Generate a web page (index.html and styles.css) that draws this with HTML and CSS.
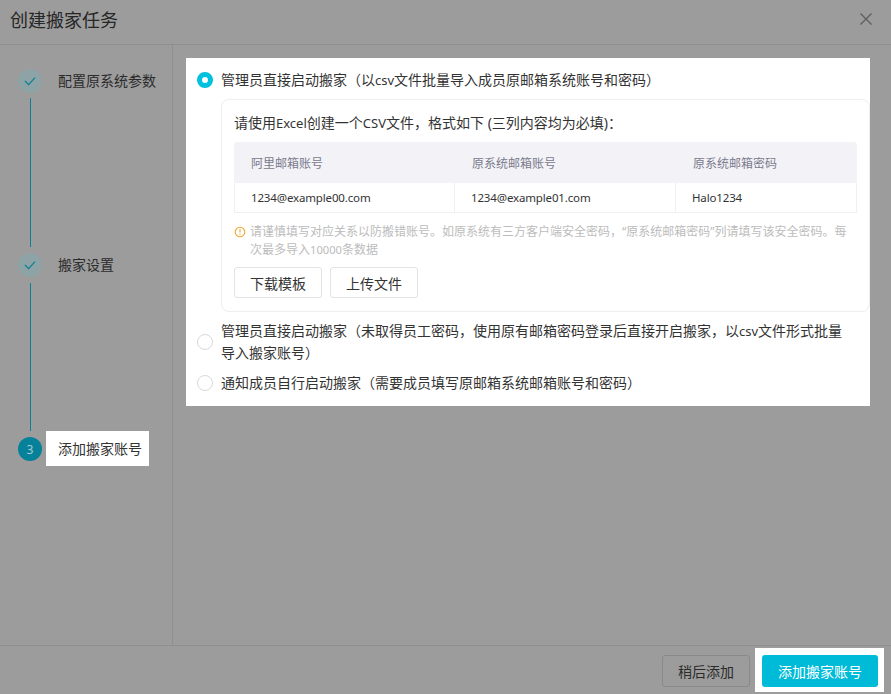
FILE: index.html
```html
<!DOCTYPE html>
<html lang="zh-CN">
<head>
    <meta charset="UTF-8">
    <title>创建搬家任务</title>
    <link rel="stylesheet" href="styles.css">
</head>
<body>
    <div class="dialog">
        <header class="dialog-header">
            <h1>创建搬家任务</h1>
            <svg class="close" width="14" height="14" viewBox="0 0 14 14"><path d="M1.5 1.5l11 11M12.5 1.5l-11 11" stroke="#5c5c5c" stroke-width="1.2" fill="none"/></svg>
        </header>

        <div class="dialog-body">
            <aside class="steps">
                <div class="step">
                    <div class="step-mark">
                        <span class="dot done"><svg width="12" height="10" viewBox="0 0 12 10"><path d="M1 5l3.6 3.6L11 1.6" stroke="#0b8097" stroke-width="1.3" fill="none"/></svg></span>
                        <span class="line line-first"></span>
                    </div>
                    <div class="step-label">配置原系统参数</div>
                </div>
                <div class="step">
                    <div class="step-mark">
                        <span class="dot done"><svg width="12" height="10" viewBox="0 0 12 10"><path d="M1 5l3.6 3.6L11 1.6" stroke="#0b8097" stroke-width="1.3" fill="none"/></svg></span>
                        <span class="line line-second"></span>
                    </div>
                    <div class="step-label">搬家设置</div>
                </div>
                <div class="step">
                    <div class="step-mark">
                        <span class="dot active">3</span>
                    </div>
                    <div class="step-label current">添加搬家账号</div>
                </div>
            </aside>

            <main class="content">
                <div class="options">
                    <div class="option option-first">
                        <span class="radio checked"></span>
                        <span>管理员直接启动搬家（以<span class="latin">csv</span>文件批量导入成员原邮箱系统账号和密码）</span>
                    </div>

                    <div class="card">
                        <p class="card-title">请使用<span class="latin">Excel</span>创建一个<span class="latin">CSV</span>文件，格式如下 (三列内容均为必填)：</p>
                        <table class="format-table">
                            <tr>
                                <th class="col-a">阿里邮箱账号</th>
                                <th class="col-b">原系统邮箱账号</th>
                                <th>原系统邮箱密码</th>
                            </tr>
                            <tr>
                                <td>1234@example00.com</td>
                                <td>1234@example01.com</td>
                                <td>Halo1234</td>
                            </tr>
                        </table>
                        <div class="tip">
                            <svg class="tip-icon" width="12" height="12" viewBox="0 0 12 12"><circle cx="6" cy="6" r="4.8" stroke="#f0a52b" stroke-width="1.1" fill="none"/><path d="M6 3.2v3.4M6 7.7v1" stroke="#f0a52b" stroke-width="1.1"/></svg>
                            <span>请谨慎填写对应关系以防搬错账号。如原系统有三方客户端安全密码，“原系统邮箱密码”列请填写该安全密码。每次最多导入<span class="latin">10000</span>条数据</span>
                        </div>
                        <div class="card-actions">
                            <button class="btn">下载模板</button>
                            <button class="btn">上传文件</button>
                        </div>
                    </div>

                    <div class="option option-wrap">
                        <span class="radio"></span>
                        <span>管理员直接启动搬家（未取得员工密码，使用原有邮箱密码登录后直接开启搬家，以<span class="latin">csv</span>文件形式批量导入搬家账号）</span>
                    </div>
                    <div class="option option-last">
                        <span class="radio"></span>
                        <span>通知成员自行启动搬家（需要成员填写原邮箱系统邮箱账号和密码）</span>
                    </div>
                </div>
            </main>
        </div>

        <footer class="dialog-footer">
            <button class="btn btn-later">稍后添加</button>
            <div class="primary-wrap">
                <button class="btn-primary">添加搬家账号</button>
            </div>
        </footer>
    </div>
</body>
</html>
```

FILE: styles.css
```css
* {
    box-sizing: border-box;
}
body {
    margin: 0;
    font-family: "Noto Sans", "Noto Sans CJK SC", sans-serif;
    font-size: 14px;
    color: #333;
    background-color: #9c9c9c;
}
.latin {
    font-size: 0.93em;
}
.dialog {
    width: 891px;
    height: 694px;
    display: flex;
    flex-direction: column;
    overflow: hidden;
}
.dialog-header {
    height: 45px;
    flex: none;
    display: flex;
    align-items: center;
    justify-content: space-between;
    padding: 0 18px 6px 10px;
    border-bottom: 1px solid #8f8f8f;
}
.dialog-header h1 {
    margin: 0;
    font-size: 18px;
    font-weight: 400;
    color: #262626;
}
.dialog-body {
    flex: 1;
    display: flex;
    min-height: 0;
}
.steps {
    width: 173px;
    flex: none;
    padding: 24px 0 0 18px;
    border-right: 1px solid #8f8f8f;
}
.step {
    display: flex;
    align-items: flex-start;
}
.step-mark {
    width: 24px;
    flex: none;
    display: flex;
    flex-direction: column;
    align-items: center;
}
.dot {
    width: 24px;
    height: 24px;
    border-radius: 50%;
    flex: none;
    display: flex;
    align-items: center;
    justify-content: center;
    font-size: 12px;
}
.dot.done {
    background-color: #8ea3a5;
}
.dot.active {
    background-color: #06819a;
    color: #a9cdd5;
}
.line {
    width: 1px;
    background-color: #0b8097;
}
.line-first {
    height: 149px;
    margin: 5px 0 6px;
}
.line-second {
    height: 148px;
    margin: 6px 0;
}
.step-label {
    margin-left: 16px;
    line-height: 24px;
    color: #2b2b2b;
}
.step-label.current {
    margin-left: 4px;
    margin-top: -6px;
    padding: 6px 7px 5px 12px;
    background-color: #fff;
    color: #333;
}
.content {
    flex: 1;
    padding: 13px 21px 0 13px;
}
.options {
    background-color: #fff;
    padding: 11px 0 12px 11px;
    height: 348px;
}
.option {
    display: flex;
    align-items: center;
    line-height: 22px;
}
.option-wrap {
    margin-top: 8px;
    padding-right: 24px;
}
.option-last {
    margin-top: 8px;
}
.radio {
    width: 16px;
    height: 16px;
    flex: none;
    margin-right: 8px;
    border: 1px solid #d9d9d9;
    border-radius: 50%;
}
.radio.checked {
    border: 5px solid #00c1de;
}
.card {
    margin: 8px 0 0 24px;
    height: 213px;
    padding: 12px 12px 0;
    border: 1px solid #eee;
    border-radius: 8px;
}
.card-title {
    margin: 0;
    line-height: 22px;
}
.format-table {
    width: 623px;
    margin-top: 8px;
    border-collapse: separate;
    border-spacing: 0;
    table-layout: fixed;
    font-size: 12px;
}
.format-table th {
    height: 41px;
    padding: 0 0 0 17px;
    text-align: left;
    font-weight: 400;
    color: #7a7a8c;
    background-color: #f3f3f7;
}
.format-table th:first-child {
    border-top-left-radius: 4px;
}
.format-table th:last-child {
    border-top-right-radius: 4px;
}
.format-table td {
    height: 30px;
    padding: 0 0 0 16px;
    font-size: 11.5px;
    letter-spacing: -0.15px;
    color: #333;
    border-right: 1px solid #f0f0f0;
    border-bottom: 1px solid #f0f0f0;
}
.format-table td:first-child {
    border-left: 1px solid #f0f0f0;
}
.col-a {
    width: 221px;
}
.col-b {
    width: 221px;
}
.tip {
    display: flex;
    margin-top: 10px;
    font-size: 12px;
    line-height: 18px;
    color: #bcbcbc;
}
.tip-icon {
    flex: none;
    margin: 3px 4px 0 0;
}
.card-actions {
    display: flex;
    gap: 8px;
    margin-top: 8px;
}
.card-actions .btn {
    height: 31px;
}
.btn {
    width: 88px;
    height: 32px;
    padding: 0;
    font-family: inherit;
    font-size: 14px;
    color: #333;
    background-color: #fff;
    border: 1px solid #e3e3e3;
    border-radius: 3px;
}
.dialog-footer {
    height: 49px;
    flex: none;
    display: flex;
    align-items: center;
    justify-content: flex-end;
    padding: 0 7px 0 0;
    border-top: 1px solid #8f8f8f;
}
.btn-later {
    height: 32px;
    margin-top: 2px;
    color: #2b2b2b;
    background-color: #9c9c9c;
    border-color: #8a8a8a;
}
.primary-wrap {
    margin-left: 5px;
    padding: 7px 6px 5px 7px;
    background-color: #fff;
}
.btn-primary {
    display: block;
    width: 116px;
    height: 32px;
    padding: 0;
    font-family: inherit;
    font-size: 14px;
    color: #fff;
    background-color: #00bbd8;
    border: 0;
    border-radius: 3px;
}
```
